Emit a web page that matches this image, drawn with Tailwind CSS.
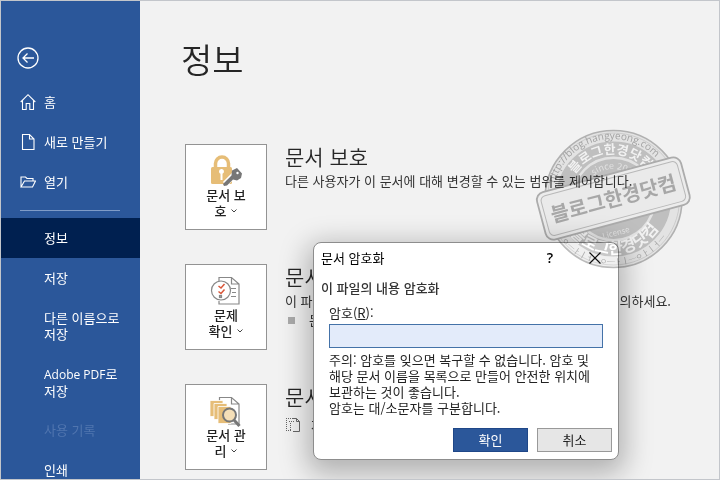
<!DOCTYPE html>
<html lang="ko">
<head>
<meta charset="utf-8">
<meta name="viewport" content="width=device-width, initial-scale=1">
<title>정보</title>
<script src="https://cdn.jsdelivr.net/npm/@tailwindcss/browser@4"></script>
</head>
<body class="relative h-screen overflow-hidden border border-[#c3c6cb] bg-[#f2f2f2] font-['Noto_Sans_CJK_KR',sans-serif] text-[13px] leading-4 text-[#333]">
<div class="flex h-full">
  <nav class="flex w-[139px] shrink-0 flex-col overflow-hidden bg-[#2b579a] text-white" aria-label="파일 메뉴">
    <button type="button" aria-label="뒤로" class="mt-[46px] ml-4 size-[22px] shrink-0">
      <svg viewBox="0 0 22 22" class="size-[22px]" fill="none" stroke="#fff" stroke-width="1.3"><circle cx="11" cy="11" r="10"/><path d="M17 11H6M10.500 6.500L6 11l4.500 4.500"/></svg>
    </button>
    <div class="mt-[13px] flex shrink-0 flex-col">
      <a href="#" class="flex h-10 items-center gap-2 pl-[19px]"><svg viewBox="0 0 16 18" class="h-[18px] w-4" fill="none" stroke="#fff" stroke-width="1.100"><path d="M.7 9L8 1.700 15.300 9M2.500 7.500v9h3.700v-6h3.600v6h3.700v-9"/></svg>홈</a>
      <a href="#" class="flex h-10 items-center gap-2 pl-[19px]"><svg viewBox="0 0 16 18" class="h-[18px] w-4" fill="none" stroke="#fff" stroke-width="1.100"><path d="M2.500 1.500h7l4.500 4.500v10.500H2.500zM9.500 1.500V6H14"/></svg>새로 만들기</a>
      <a href="#" class="flex h-10 items-center gap-2 pl-[19px]"><svg viewBox="0 0 16 18" class="h-[18px] w-4" fill="none" stroke="#fff" stroke-width="1.100"><path d="M1 14V4h4.500l1.500 1.500h6v2.500M1 14L4.500 8h11l-3 6z"/></svg>열기</a>
    </div>
    <hr class="mt-2 mr-5 mb-[7px] ml-[19px] border-[#7f9cc8]">
    <a href="#" aria-current="page" class="flex h-10 shrink-0 items-center bg-[#002050] pl-[43px]">정보</a>
    <a href="#" class="flex h-10 shrink-0 items-center pl-[43px]">저장</a>
    <a href="#" class="flex h-14 shrink-0 items-center pl-[43px]">다른 이름으로<br>저장</a>
    <a href="#" class="flex h-14 shrink-0 items-center pl-[43px]"><span><span class="font-['Open_Sans',sans-serif] text-xs leading-4">Adobe PDF</span>로<br>저장</span></a>
    <a href="#" aria-disabled="true" class="flex h-10 shrink-0 items-center pl-[43px] text-[#5075af]">사용 기록</a>
    <a href="#" class="flex h-10 shrink-0 items-center pl-[43px]">인쇄</a>
  </nav>

  <main class="min-w-0 flex-1 pl-[45px]">
    <h1 class="-ml-1 mt-[34px] mb-[61px] text-[34px] leading-[48px] font-[350] text-[#262626]">정보</h1>
    <div class="flex flex-col gap-[34px]">
      <section class="flex gap-[18px]">
        <button type="button" class="flex h-[86px] w-[82px] shrink-0 flex-col items-center border border-[#939393] bg-white pt-2 font-medium text-[#222]">
          <svg viewBox="0 0 34 34" class="size-[34px]"><path d="M6.500 16V10.500a6.500 6.500 0 0 1 13 0V16" fill="none" stroke="#e6bd77" stroke-width="3.500"/><rect x="2" y="14" width="21" height="17" rx="1.500" fill="#e6bd77"/><path d="M10 18.500a2.500 2.500 0 1 1 3.500 2.300V27h-2v-6.200a2.500 2.500 0 0 1-1.500-2.300" fill="#fff"/><path d="M16 31L26 21" stroke="#fff" stroke-width="6"/><path d="M23 17.500l5-2.500 5 5.500-1 4.500-4 2.500-4-1-6 6-3 .5-1-2 8.500-8.500z" fill="#777"/><circle cx="28.500" cy="20" r="1.200" fill="#fff"/></svg>
          <span>문서 보</span>
          <span class="flex items-center gap-[5px]">호<svg viewBox="0 0 6 4" class="h-1 w-1.5" fill="none" stroke="#444"><path d="M.5 .5l2.500 2.500 2.500-2.500"/></svg></span>
        </button>
        <div>
          <h2 class="text-[21px] leading-6 font-[350] text-[#262626]">문서 보호</h2>
          <p class="mt-[5px] whitespace-nowrap">다른 사용자가 이 문서에 대해 변경할 수 있는 범위를 제어합니다.</p>
        </div>
      </section>
      <section class="flex gap-[18px]">
        <button type="button" class="flex h-[86px] w-[82px] shrink-0 flex-col items-center border border-[#939393] bg-white pt-2 font-medium text-[#222]">
          <svg viewBox="0 0 34 34" class="size-[34px]" fill="none" stroke="#888" stroke-width="1.200"><path d="M10 8V4.500h12.500L30 11v20H10v-3M22.500 4.500V11H30M22 15.500h5M23 19.500h4M22 23.500h5"/><circle cx="12" cy="17.500" r="9.500" fill="#fff"/><path d="M9.500 13l2.500 2 3.500-4M9.500 18.500l2.500 2 3.500-4" stroke="#d9573a" stroke-width="1.500"/><rect x="10.500" y="22.500" width="2" height="2"/></svg>
          <span>문제</span>
          <span class="flex items-center gap-[5px]">확인<svg viewBox="0 0 6 4" class="h-1 w-1.5" fill="none" stroke="#444"><path d="M.5 .5l2.500 2.500 2.500-2.500"/></svg></span>
        </button>
        <div class="min-w-0 flex-1">
          <h2 class="text-[21px] leading-6 font-[350] text-[#262626]">문서 검사</h2>
          <p class="mt-[5px] flex w-[386px] justify-between whitespace-nowrap"><span>이 파일을 게시하기 전에</span><span>주의하세요.</span></p>
          <p class="mt-[3px] flex items-center gap-[14px] pl-[3px]"><span class="size-[7px] bg-[#aaa]"></span>문서 속성</p>
        </div>
      </section>
      <section class="flex gap-[18px]">
        <button type="button" class="flex h-[86px] w-[82px] shrink-0 flex-col items-center border border-[#939393] bg-white pt-2 font-medium text-[#222]">
          <svg viewBox="0 0 34 34" class="size-[34px]"><path d="M10.500 8V4.500h12L30 11v20H19M22.500 4.500V11H30" fill="none" stroke="#888" stroke-width="1.200"/><g fill="#e6bd77" stroke="#fff" stroke-width=".8"><path d="M1 7.500h13v16H1z"/><path d="M5 10.500h13v16H5z"/><path d="M9 13.500h13v17H9z"/></g><path d="M25 27l5.500 6" stroke="#777" stroke-width="3"/><circle cx="20.500" cy="22" r="6.500" fill="#f5dfb8" stroke="#777" stroke-width="2"/></svg>
          <span>문서 관</span>
          <span class="flex items-center gap-[5px]">리<svg viewBox="0 0 6 4" class="h-1 w-1.5" fill="none" stroke="#444"><path d="M.5 .5l2.500 2.500 2.500-2.500"/></svg></span>
        </button>
        <div>
          <h2 class="text-[21px] leading-6 font-[350] text-[#262626]">문서 관리</h2>
          <p class="mt-[9px] flex items-center gap-[10px]"><svg viewBox="0 0 16 16" class="size-4" fill="none" stroke="#666"><path d="M1 1.500h8M1.500 3v11M3 13.500h4M4 4.500h5M5.500 6v8" stroke-dasharray="1 1"/><path d="M8 1.500h3.500l3 3v10H8M11.500 1.500v3h3"/></svg>저장되지 않은</p>
        </div>
      </section>
    </div>
  </main>
</div>

<form class="absolute top-[241px] left-[312px] flex w-[306px] flex-col rounded-lg border border-[#8d8d8d] bg-white pr-[6px] pb-[7px] pl-[7px] text-[#222] shadow-[0_8px_28px_6px_rgb(0_0_0/0.27)]" role="dialog" aria-labelledby="dialog-title">
  <header class="flex h-[29px] items-center">
    <h3 id="dialog-title" class="flex-1 text-black">문서 암호화</h3>
    <button type="button" aria-label="도움말" class="w-7 font-['Open_Sans',sans-serif] text-sm font-semibold text-black">?</button>
    <button type="button" aria-label="닫기" class="mr-[5px] ml-[19px] flex w-6 justify-center"><svg viewBox="0 0 12 12" class="size-3" stroke="#111" stroke-width="1.200"><path d="M.5 .5l11 11M11.500 .5L.5 11.500"/></svg></button>
  </header>
  <h4 class="mt-2 font-medium text-[#333]">이 파일의 내용 암호화</h4>
  <label for="password" class="mt-[9px] ml-2">암호(<u>R</u>):</label>
  <input id="password" type="password" class="mt-[3px] mr-[9px] ml-2 h-6 border border-[#4472a8] bg-[#e3ebfa] px-1 outline-none">
  <p class="mt-1 ml-2 whitespace-nowrap">주의: 암호를 잊으면 복구할 수 없습니다. 암호 및<br>해당 문서 이름을 목록으로 만들어 안전한 위치에<br>보관하는 것이 좋습니다.<br>암호는 대/소문자를 구분합니다.</p>
  <div class="mt-3 flex justify-end gap-[9px]">
    <button type="submit" class="h-6 w-[75px] border border-[#1f4788] bg-[#2b579a] text-white">확인</button>
    <button type="button" class="h-6 w-[75px] border border-[#999] bg-[#e6e6e6]">취소</button>
  </div>
</form>

<svg viewBox="0 0 160 144" class="pointer-events-none absolute top-[127px] left-[533px] h-[144px] w-40 font-['Noto_Sans_CJK_KR',sans-serif] mix-blend-multiply" role="img" aria-label="블로그한경닷컴">
  <defs>
    <path id="outer-arc" d="M18.500 71a60 60 0 0 1 120 0"/>
    <path id="upper-arc" d="M33.500 71a45 45 0 0 1 90 0"/>
    <path id="lower-arc" d="M23.500 71a55 55 0 0 0 110 0"/>
    <path id="rim-arc" d="M12.500 71a66 66 0 0 0 132 0"/>
    <path id="year-arc" d="M48.500 71a30 30 0 0 1 60 0"/>
  </defs>
  <circle cx="79.500" cy="71" r="68.500" fill="#f0f0f0" stroke="#bbb" stroke-width="1.600"/>
  <circle cx="79.500" cy="71" r="66" fill="none" stroke="#ccc" stroke-width=".7"/>
  <circle cx="79.500" cy="71" r="50" fill="none" stroke="#c9c9c9" stroke-width="15"/>
  <circle cx="79.500" cy="71" r="40" fill="#c9c9c9"/>
  <g fill="#aaa"><text font-family="Open Sans" font-size="10"><textPath href="#outer-arc" startOffset="16">http://blog.hangyeong.com</textPath></text>
  <text font-size="8"><textPath href="#rim-arc" startOffset="45">ㅇ─ㅏㅣㅓ─ㅇ─ㅏㅣ─ㅇㅏㅣㅓ─</textPath></text></g>
  <g fill="#fff" font-weight="700"><text font-size="13"><textPath href="#upper-arc" startOffset="26">블로그한경닷컴</textPath></text>
  <text font-size="16"><textPath href="#lower-arc" startOffset="38">블로그한경닷컴</textPath></text></g>
  <text font-size="9" fill="#eee"><textPath href="#year-arc" startOffset="27">since 2009</textPath></text>
  <text x="68" y="108" font-size="8" fill="#eee" transform="rotate(-15 80 105)">License</text>
  <g transform="rotate(-15 79.500 71)" stroke="#b5b5b5">
    <rect x="5" y="46" width="149" height="49" rx="8" fill="#f9f9f9" stroke-width="1.800"/>
    <rect x="9" y="50" width="141" height="41" rx="5" fill="#f7f7f7" stroke="#c2c2c2"/>
    <text x="79.500" y="78" text-anchor="middle" font-size="20" font-weight="700" fill="#b0b0b0" stroke="none">블로그한경닷컴</text>
  </g>
</svg>
</body>
</html>
